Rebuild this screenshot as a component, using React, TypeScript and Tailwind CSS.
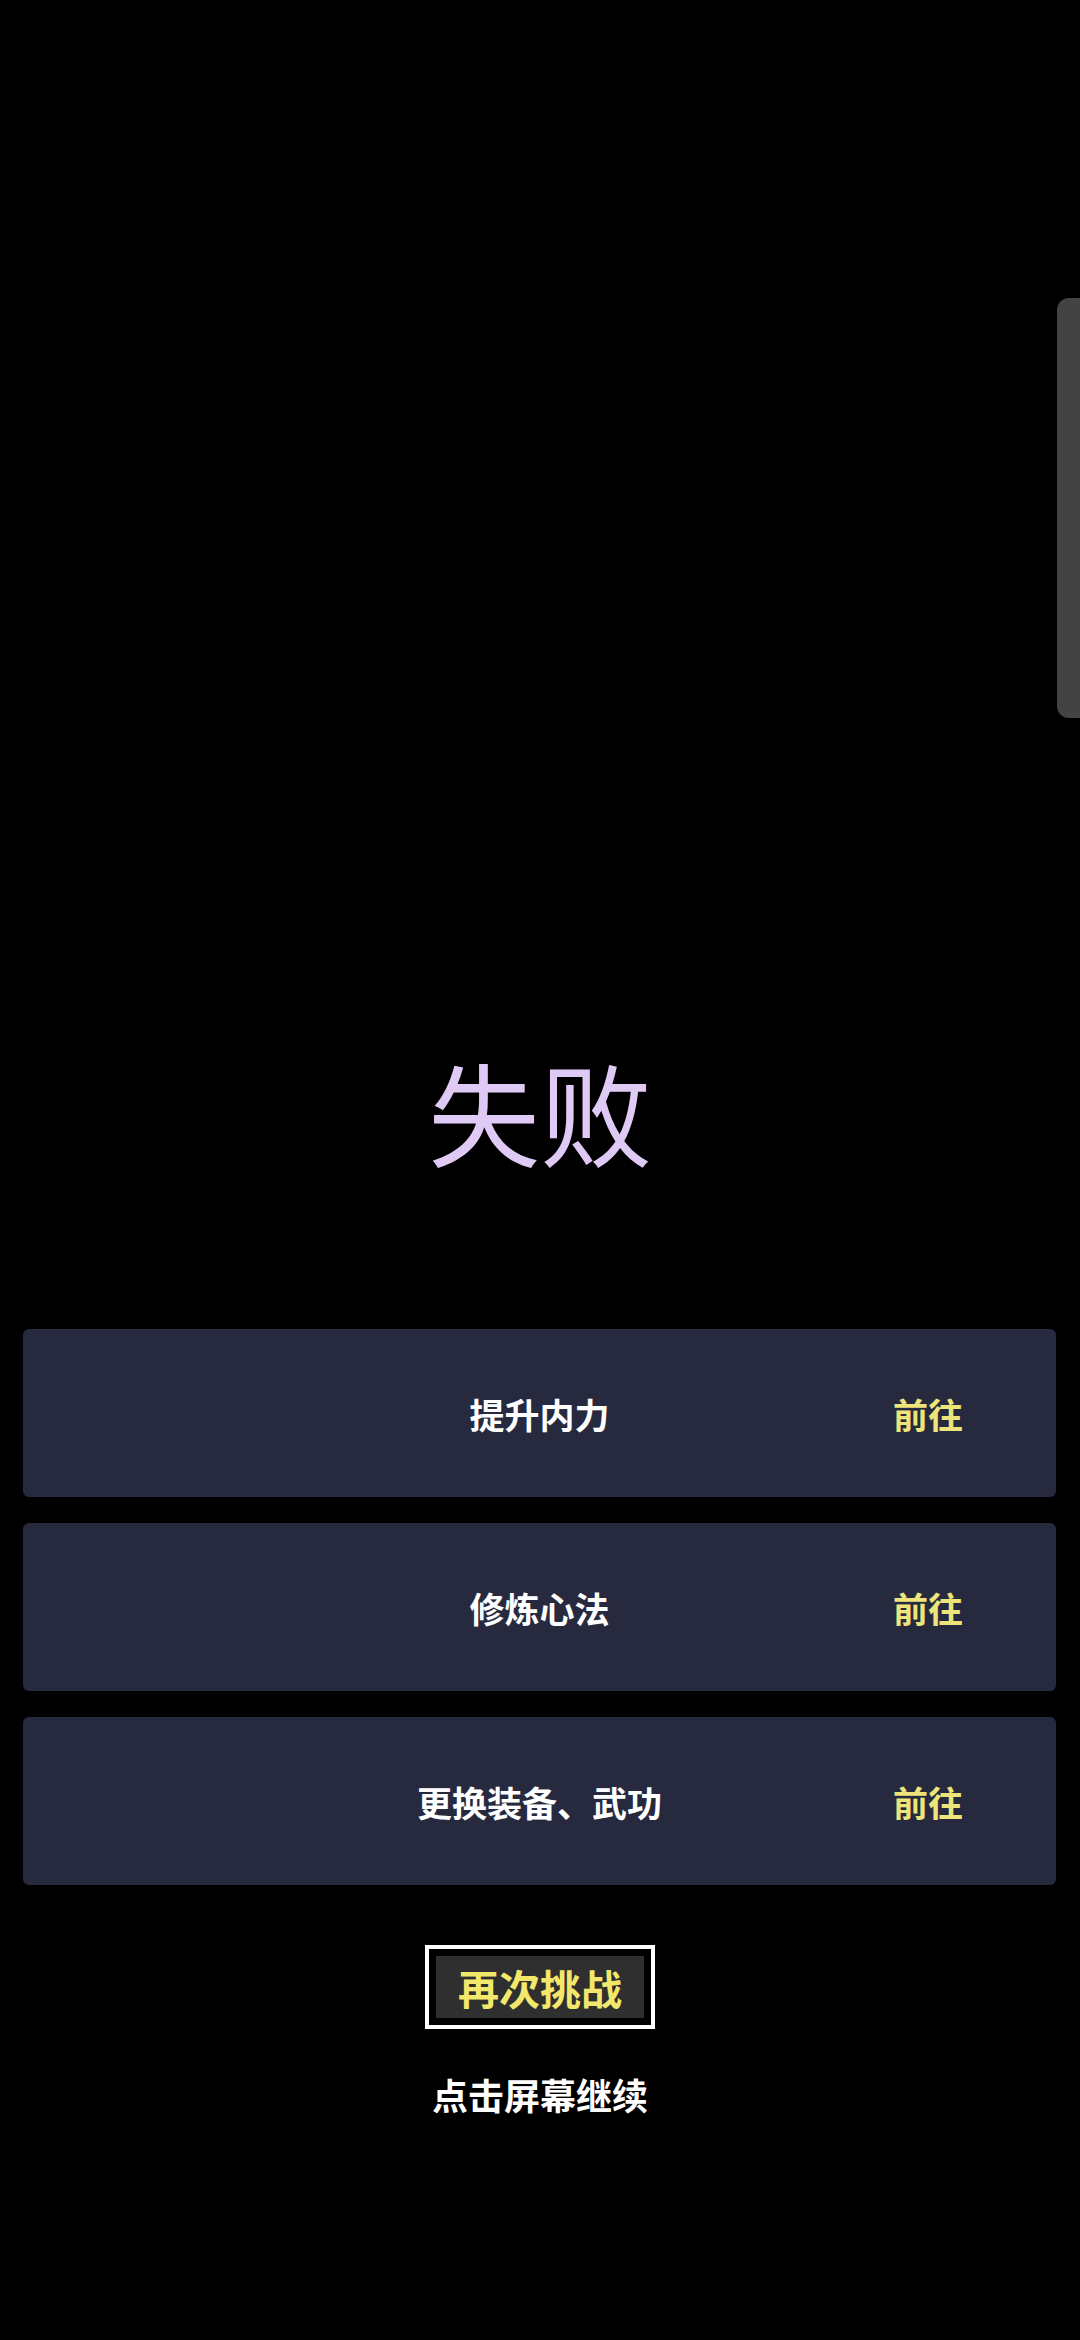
const FONT = { fontFamily: '"Noto Sans CJK SC", "Noto Sans", sans-serif' };

const TIPS = ["提升内力", "修炼心法", "更换装备、武功"];

export default function App() {
  return (
    <div className="relative flex h-[2340px] w-[1080px] flex-col items-center overflow-hidden bg-black" style={FONT}>
      {/* Side handle */}
      <div className="absolute right-0 top-[298px] h-[420px] w-[23px] rounded-l-[12px] bg-[#434343]" />

      {/* Title */}
      <h1 className="mt-[1054px] text-[112px] font-normal leading-none text-[#dfcaf6]">失败</h1>

      {/* Tips */}
      <div className="mt-[163px] flex w-full flex-col gap-[26px] pl-[23px] pr-[24px]">
        {TIPS.map((tip) => (
          <div key={tip} className="relative flex h-[168px] items-center justify-center rounded-[6px] bg-[#272a3f]">
            <span className="text-[35px] font-bold leading-none text-white">{tip}</span>
            <span className="absolute right-[93px] text-[35px] font-bold leading-none text-[#ede47a]">前往</span>
          </div>
        ))}
      </div>

      {/* Retry */}
      <button className="mt-[60px] flex h-[84px] w-[230px] items-center justify-center border-[4px] border-white bg-black p-[7px]">
        <span className="flex h-full w-full items-center justify-center bg-[#2f2f2f] text-[41px] font-bold leading-none text-[#f3e86b]">
          再次挑战
        </span>
      </button>

      <p className="mt-[47px] text-[36px] font-bold leading-none text-white">点击屏幕继续</p>
    </div>
  );
}
